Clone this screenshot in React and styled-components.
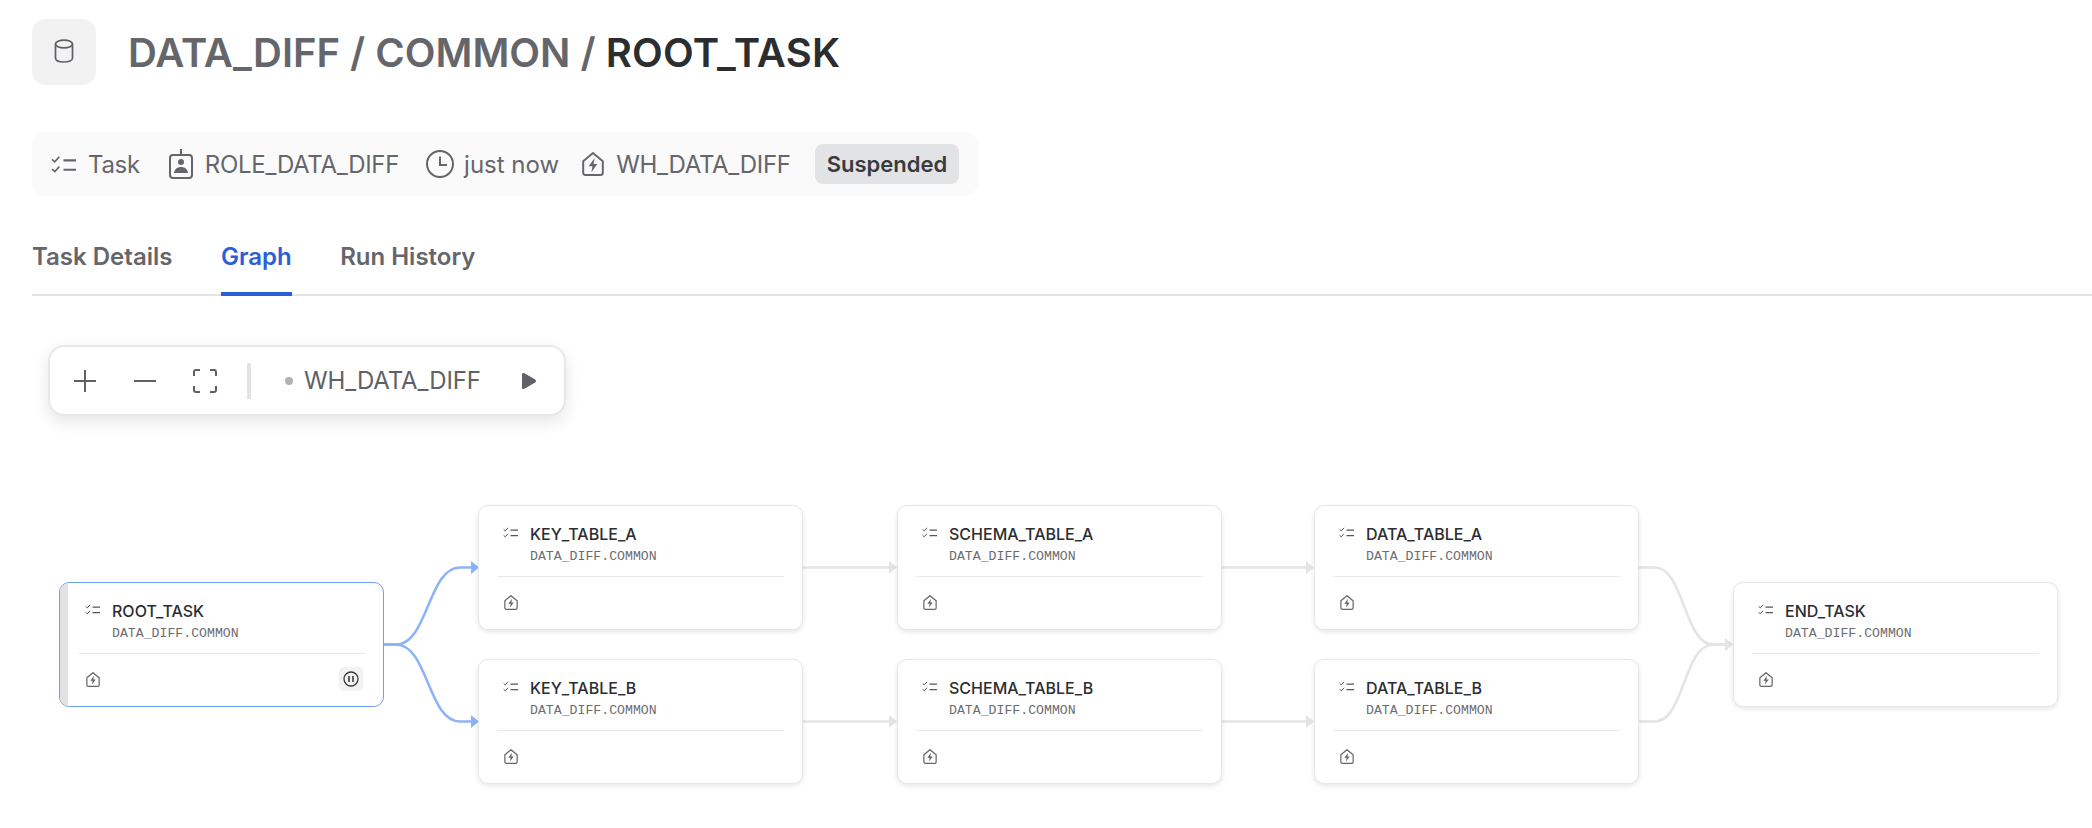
import styled, { createGlobalStyle } from "styled-components";

const GlobalStyle = createGlobalStyle`
  html, body {
    margin: 0;
    background: #fff;
    font-family: Inter, "Liberation Sans", sans-serif;
    overflow: hidden;
  }
`;

const CANVAS_TOP = 296;

const nodes = [
  { name: "ROOT_TASK", x: 59, y: 582, selected: true },
  { name: "KEY_TABLE_A", x: 478, y: 505 },
  { name: "KEY_TABLE_B", x: 478, y: 659 },
  { name: "SCHEMA_TABLE_A", x: 897, y: 505 },
  { name: "SCHEMA_TABLE_B", x: 897, y: 659 },
  { name: "DATA_TABLE_A", x: 1314, y: 505 },
  { name: "DATA_TABLE_B", x: 1314, y: 659 },
  { name: "END_TASK", x: 1733, y: 582 },
];

const BLUE = "#8db2f8";
const GRAY = "#e3e4e6";

const edges = [
  { d: "M384 644.500 H396 C428 644.500 428 567.500 460 567.500 H472", color: BLUE, tip: [479, 567.5] },
  { d: "M384 644.500 H396 C428 644.500 428 721.500 460 721.500 H472", color: BLUE, tip: [479, 721.5] },
  { d: "M803 567.500 H890", color: GRAY, tip: [897, 567.5] },
  { d: "M803 721.500 H890", color: GRAY, tip: [897, 721.5] },
  { d: "M1221 567.500 H1307", color: GRAY, tip: [1314, 567.5] },
  { d: "M1221 721.500 H1307", color: GRAY, tip: [1314, 721.5] },
  { d: "M1639 567.500 H1655 C1684 567.500 1684 644.500 1713 644.500 H1726", color: GRAY, tip: [1733, 644.5] },
  { d: "M1639 721.500 H1655 C1684 721.500 1684 644.500 1713 644.500 H1726", color: GRAY, tip: [1733, 644.5] },
];

function TaskIcon({ size = 24 }) {
  return (
    <svg width={size} height={size} viewBox="0 0 24 24" fill="none" stroke="currentColor" strokeWidth="2">
      <path d="M1 7l2.600 2.400L8 4.500" strokeWidth="1.600" />
      <path d="M1 16.500l2.600 2.400L8 14" strokeWidth="1.600" />
      <path d="M12 8h12M12 17h12" />
    </svg>
  );
}

function WarehouseIcon({ width = 22, height = 24 }) {
  return (
    <svg width={width} height={height} viewBox="2 1 20 22" fill="none" stroke="currentColor" strokeWidth="1.800">
      <path d="M3 9.500L12 2l9 7.500V20a2 2 0 0 1-2 2H5a2 2 0 0 1-2-2z" strokeLinejoin="round" />
      <path d="M13.500 6.500L8 14h3.500l-1 5.500L16 12h-3.500z" fill="currentColor" stroke="none" />
    </svg>
  );
}

function BadgeIcon() {
  return (
    <svg width="24" height="30" viewBox="0 0 24 30" fill="none" stroke="currentColor" strokeWidth="2">
      <rect x="1" y="6" width="22" height="23" rx="3" />
      <path d="M12 0v6" />
      <circle cx="12" cy="13" r="3" fill="currentColor" stroke="none" />
      <path d="M5 24c.5-4 3.500-6 7-6s6.500 2 7 6z" fill="currentColor" stroke="none" />
    </svg>
  );
}

function ClockIcon() {
  return (
    <svg width="28" height="28" viewBox="0 0 28 28" fill="none" stroke="currentColor" strokeWidth="2">
      <circle cx="14" cy="14" r="13" />
      <path d="M14 6.500V15h7" />
    </svg>
  );
}

function DatabaseIcon() {
  return (
    <svg width="20" height="24" viewBox="0 0 20 24" fill="none" stroke="currentColor" strokeWidth="1.700">
      <ellipse cx="10" cy="5" rx="8.500" ry="3.800" />
      <path d="M1.500 5v14c0 2.500 3.800 4 8.500 4s8.500-1.500 8.500-4V5" />
    </svg>
  );
}

function FrameIcon() {
  return (
    <svg width="24" height="24" viewBox="0 0 24 24" fill="none" stroke="currentColor" strokeWidth="2">
      <path d="M1 7V3a2 2 0 0 1 2-2h4M17 1h4a2 2 0 0 1 2 2v4M23 17v4a2 2 0 0 1-2 2h-4M7 23H3a2 2 0 0 1-2-2v-4" />
    </svg>
  );
}

function PauseIcon() {
  return (
    <svg width="16" height="16" viewBox="0 0 16 16" fill="none" stroke="currentColor" strokeWidth="1.300">
      <circle cx="8" cy="8" r="7" />
      <path d="M6 5v6M10 5v6" strokeWidth="1.600" />
    </svg>
  );
}

export default function App() {
  return (
    <>
      <GlobalStyle />
      <Page>
        <Header>
          <HeaderIcon>
            <DatabaseIcon />
          </HeaderIcon>
          <Title>
            DATA_DIFF / COMMON / <strong>ROOT_TASK</strong>
          </Title>
        </Header>

        <MetaBar>
          <MetaItem $next={29} $track={-0.3}>
            <TaskIcon size={25} />
            Task
          </MetaItem>
          <MetaItem $next={27} $track={-0.3}>
            <BadgeIcon />
            ROLE_DATA_DIFF
          </MetaItem>
          <MetaItem $next={23} $gap={10}>
            <ClockIcon />
            just now
          </MetaItem>
          <MetaItem $next={24} $track={-0.3}>
            <WarehouseIcon />
            WH_DATA_DIFF
          </MetaItem>
          <StatusBadge>Suspended</StatusBadge>
        </MetaBar>

        <Tabs>
          <Tab>Task Details</Tab>
          <Tab $active>Graph</Tab>
          <Tab>Run History</Tab>
        </Tabs>

        <Canvas>
          <Toolbar>
            <ToolButton>
              <svg width="24" height="24" viewBox="0 0 24 24" stroke="currentColor" strokeWidth="2">
                <path d="M1 12h22M12 1v22" />
              </svg>
            </ToolButton>
            <ToolButton>
              <svg width="24" height="24" viewBox="0 0 24 24" stroke="currentColor" strokeWidth="2">
                <path d="M1 12h22" />
              </svg>
            </ToolButton>
            <ToolButton>
              <FrameIcon />
            </ToolButton>
            <ToolDivider />
            <Dot />
            <ToolLabel>WH_DATA_DIFF</ToolLabel>
            <PlayIcon viewBox="0 0 16 18" width="16" height="18">
              <path d="M1 2.500C1 1 2.200.5 3.400 1.200l10.800 6.300c1.100.7 1.100 2.300 0 3L3.400 16.800C2.200 17.500 1 17 1 15.500z" fill="currentColor" />
            </PlayIcon>
          </Toolbar>

          <Edges viewBox={`0 ${CANVAS_TOP} 2092 532`} width="2092" height="532">
            {edges.map((e, i) => (
              <g key={i}>
                <path d={e.d} fill="none" stroke={e.color} strokeWidth="2.500" />
                <path d={`M${e.tip[0]} ${e.tip[1]} l-8 -6.500 v13 z`} fill={e.color} />
              </g>
            ))}
          </Edges>

          {nodes.map((n) => (
            <Node key={n.name} $x={n.x} $y={n.y - CANVAS_TOP} $selected={n.selected}>
              <NodeHead>
                <NodeTaskIcon>
                  <TaskIcon size={15} />
                </NodeTaskIcon>
                <div>
                  <NodeName>{n.name}</NodeName>
                  <NodeSchema>DATA_DIFF.COMMON</NodeSchema>
                </div>
              </NodeHead>
              <NodeFoot>
                <NodeWarehouse>
                  <WarehouseIcon width={14} height={15} />
                </NodeWarehouse>
                {n.selected && (
                  <PauseButton>
                    <PauseIcon />
                  </PauseButton>
                )}
              </NodeFoot>
            </Node>
          ))}
        </Canvas>
      </Page>
    </>
  );
}

const Page = styled.div`
  width: 2092px;
  height: 828px;
  overflow: hidden;
`;

const Header = styled.div`
  display: flex;
  align-items: center;
  gap: 32px;
  padding: 19px 0 0 32px;
`;

const HeaderIcon = styled.div`
  width: 64px;
  height: 66px;
  box-sizing: border-box;
  padding-bottom: 2px;
  border-radius: 14px;
  background: #f2f2f3;
  color: #5f6066;
  display: flex;
  align-items: center;
  justify-content: center;
`;

const Title = styled.h1`
  margin: 0;
  font-size: 40px;
  font-weight: 600;
  color: #65666b;

  strong {
    font-weight: 600;
    letter-spacing: 0.2px;
    color: #2c2d31;
  }
`;

const MetaBar = styled.div`
  display: flex;
  align-items: center;
  width: 946px;
  height: 64px;
  box-sizing: border-box;
  margin: 47px 0 0 32px;
  padding: 0 19px;
  border-radius: 14px;
  background: #fafafa;
  color: #65666b;
  font-size: 24px;
  white-space: nowrap;
`;

const MetaItem = styled.div`
  display: flex;
  align-items: center;
  gap: ${(p) => p.$gap || 12}px;
  margin-right: ${(p) => p.$next}px;
  letter-spacing: ${(p) => p.$track || 0}px;
`;

const StatusBadge = styled.div`
  padding: 0 12px;
  height: 40px;
  line-height: 40px;
  border-radius: 8px;
  background: #e2e3e5;
  color: #3a3b3f;
  font-size: 22px;
  font-weight: 600;
`;

const Tabs = styled.div`
  display: flex;
  gap: 48.500px;
  margin: 32px 0 0 32px;
  height: 68px;
  box-sizing: border-box;
  border-bottom: 2px solid #e2e3e5;
`;

const Tab = styled.div`
  height: 68px;
  box-sizing: border-box;
  padding-top: 14px;
  font-size: 24px;
  font-weight: 600;
  color: ${(p) => (p.$active ? "#2b5fd9" : "#65666b")};
  border-bottom: 4px solid ${(p) => (p.$active ? "#2b5fd9" : "transparent")};
`;

const Canvas = styled.div`
  position: relative;
  height: 532px;
`;

const Toolbar = styled.div`
  position: absolute;
  left: 48px;
  top: 49px;
  width: 518px;
  height: 71px;
  box-sizing: border-box;
  display: flex;
  align-items: center;
  padding-left: 23px;
  border: 2px solid #e6e7e8;
  border-radius: 16px;
  background: #fff;
  box-shadow: 0 6px 16px rgba(0, 0, 0, 0.1);
  color: #606166;
  z-index: 2;
`;

const ToolButton = styled.div`
  display: flex;
  margin-right: 36px;
`;

const ToolDivider = styled.div`
  width: 4px;
  height: 36px;
  margin-left: -6px;
  background: #e2e3e5;
`;

const Dot = styled.div`
  width: 8px;
  height: 8px;
  margin-left: 34px;
  border-radius: 50%;
  background: #b0b1b5;
`;

const ToolLabel = styled.div`
  margin-left: 11px;
  font-size: 24px;
  letter-spacing: -0.1px;
`;

const PlayIcon = styled.svg`
  margin-left: 40px;
`;

const Edges = styled.svg`
  position: absolute;
  left: 0;
  top: 0;
`;

const Node = styled.div`
  position: absolute;
  left: ${(p) => p.$x}px;
  top: ${(p) => p.$y}px;
  width: 325px;
  height: 125px;
  box-sizing: border-box;
  padding: 0 18px 0 ${(p) => (p.$selected ? 19 : 18)}px;
  background: #fff;
  border-radius: 10px;
  overflow: hidden;
  border: 1.5px solid ${(p) => (p.$selected ? "#6f9ff5" : "#e6e7e8")};
  box-shadow: ${(p) => (p.$selected ? "none" : "0 2px 5px rgba(0, 0, 0, 0.1)")};

  &::before {
    content: "";
    display: ${(p) => (p.$selected ? "block" : "none")};
    position: absolute;
    left: 0;
    top: 0;
    bottom: 0;
    width: 8px;
    background: #e1e2e4;
  }
`;

const NodeHead = styled.div`
  display: flex;
  height: 71px;
  box-sizing: border-box;
  padding-top: 18px;
  border-bottom: 1.5px solid #e9e9eb;
`;

const NodeTaskIcon = styled.div`
  width: 33px;
  padding-left: 6px;
  box-sizing: border-box;
  color: #55565b;
`;

const NodeName = styled.div`
  font-size: 16px;
  font-weight: 500;
  line-height: 20px;
  color: #2c2d31;
`;

const NodeSchema = styled.div`
  margin-top: 5px;
  font-family: "Liberation Mono", monospace;
  font-size: 13.200px;
  line-height: 16px;
  color: #6b6c70;
`;

const NodeFoot = styled.div`
  display: flex;
  align-items: center;
  justify-content: space-between;
  height: 50px;
`;

const NodeWarehouse = styled.div`
  display: flex;
  padding-left: 7px;
  color: #65666b;
`;

const PauseButton = styled.div`
  width: 24px;
  height: 24px;
  margin-right: 2px;
  display: flex;
  align-items: center;
  justify-content: center;
  border-radius: 5px;
  background: #f2f2f3;
  color: #3a3b3f;
`;
